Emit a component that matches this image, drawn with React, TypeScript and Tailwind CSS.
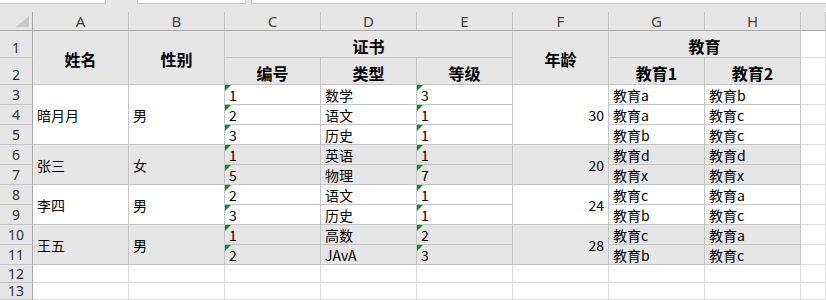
import React from "react";

type Group = {
  rows: number[];
  name: string;
  sex: string;
  c: string[];
  d: string[];
  e: string[];
  age: string;
  g: string[];
  h: string[];
  gray: boolean;
};

const groups: Group[] = [
  { rows: [3, 4, 5], name: "暗月月", sex: "男", c: ["1", "2", "3"], d: ["数学", "语文", "历史"], e: ["3", "1", "1"], age: "30", g: ["教育a", "教育a", "教育b"], h: ["教育b", "教育c", "教育c"], gray: false },
  { rows: [6, 7], name: "张三", sex: "女", c: ["1", "5"], d: ["英语", "物理"], e: ["1", "7"], age: "20", g: ["教育d", "教育x"], h: ["教育d", "教育x"], gray: true },
  { rows: [8, 9], name: "李四", sex: "男", c: ["2", "3"], d: ["语文", "历史"], e: ["1", "1"], age: "24", g: ["教育c", "教育b"], h: ["教育a", "教育c"], gray: false },
  { rows: [10, 11], name: "王五", sex: "男", c: ["1", "2"], d: ["高数", "JAvA"], e: ["2", "3"], age: "28", g: ["教育c", "教育b"], h: ["教育a", "教育c"], gray: true },
];

const COL_START = ["", "col-start-1", "col-start-2", "col-start-3", "col-start-4", "col-start-5", "col-start-6", "col-start-7", "col-start-8", "col-start-9", "col-start-10"];
const ROW_START = ["", "row-start-1", "row-start-2", "row-start-3", "row-start-4", "row-start-5", "row-start-6", "row-start-7", "row-start-8", "row-start-9", "row-start-10", "row-start-11", "row-start-12", "row-start-13", "row-start-14"];
const ROW_SPAN = ["", "row-span-1", "row-span-2", "row-span-3"];
const COL_SPAN = ["", "col-span-1", "col-span-2", "col-span-3"];

type CellProps = {
  col: number;
  row: number; // sheet row
  rs?: number;
  cs?: number;
  text?: string;
  align?: "left" | "center" | "right";
  bold?: boolean;
  gray?: boolean;
  flag?: boolean;
  light?: boolean;
};

function Cell({ col, row, rs = 1, cs = 1, text, align = "left", bold, gray, flag, light }: CellProps) {
  const justify = align === "center" ? "justify-center" : align === "right" ? "justify-end" : "justify-start";
  return (
    <div
      className={`relative flex items-center ${justify} ${COL_START[col]} ${ROW_START[row + 1]} ${ROW_SPAN[rs]} ${COL_SPAN[cs]} border-r border-b ${
        light ? "border-[#dadada]" : "border-[#c4c4c4]"
      } ${gray ? "bg-[#e7e6e6]" : "bg-white"} ${bold ? "pt-[3px] text-[16px] font-bold" : "pt-[1px] text-[14px]"} px-[4px] leading-none whitespace-nowrap text-black`}
    >
      {flag && <span className="absolute left-0 top-0 h-0 w-0 border-t-[6px] border-r-[6px] border-t-[#14862a] border-r-transparent" />}
      {text}
    </div>
  );
}

const letters = ["A", "B", "C", "D", "E", "F", "G", "H", ""];

export default function App() {
  return (
    <div className="h-[300px] w-[826px] overflow-hidden bg-white font-['Noto_Sans_CJK_SC',sans-serif]">
      {/* formula bar remnant */}
      <div className="flex h-[12px] bg-[#e6e6e6]">
        <div className="h-[4px] w-[106px] border-r border-b border-[#c4c4c4] bg-white" />
        <div className="ml-[31px] h-[4px] w-[109px] border-x border-b border-[#c4c4c4] bg-white" />
        <div className="ml-[5px] h-[4px] flex-1 border-l border-b border-[#c4c4c4] bg-white" />
      </div>

      <div className="grid grid-cols-[33px_repeat(8,96px)_1fr] grid-rows-[19px_27px_27px_repeat(9,20px)_18px_17px]">
        {/* corner */}
        <div className="col-start-1 row-start-1 flex items-end justify-end border-r border-b border-r-[#a9a9a9] border-b-[#a9a9a9] bg-[#e6e6e6] pb-[3px] pr-[3px]">
          <svg width="13" height="11" viewBox="0 0 13 11">
            <polygon points="13,0 13,11 0,11" fill="#c9c9c9" />
          </svg>
        </div>
        {letters.map((l, i) => (
          <div
            key={`h${i}`}
            className={`${COL_START[i + 2]} row-start-1 flex items-center justify-center border-r border-b border-r-[#c4c4c4] border-b-[#a9a9a9] bg-[#e6e6e6] font-['Noto_Sans',sans-serif] text-[15px] leading-none text-[#444]`}
          >
            {l}
          </div>
        ))}

        {/* row numbers */}
        {Array.from({ length: 13 }, (_, i) => i + 1).map((r) => (
          <div
            key={`r${r}`}
            className={`col-start-1 ${ROW_START[r + 1]} flex ${r <= 2 ? "items-end pb-[2px]" : "items-center"} justify-center overflow-hidden border-r border-b border-r-[#a9a9a9] border-b-[#c4c4c4] bg-[#e6e6e6] font-['Noto_Sans',sans-serif] text-[14px] leading-none text-[#333]`}
          >
            {r}
          </div>
        ))}

        {/* header block */}
        <Cell col={2} row={1} rs={2} text="姓名" align="center" bold gray />
        <Cell col={3} row={1} rs={2} text="性别" align="center" bold gray />
        <Cell col={4} row={1} cs={3} text="证书" align="center" bold gray />
        <Cell col={4} row={2} text="编号" align="center" bold gray />
        <Cell col={5} row={2} text="类型" align="center" bold gray />
        <Cell col={6} row={2} text="等级" align="center" bold gray />
        <Cell col={7} row={1} rs={2} text="年龄" align="center" bold gray />
        <Cell col={8} row={1} cs={2} text="教育" align="center" bold gray />
        <Cell col={8} row={2} text="教育1" align="center" bold gray />
        <Cell col={9} row={2} text="教育2" align="center" bold gray />
        <Cell col={10} row={1} light />
        <Cell col={10} row={2} light />

        {groups.map((g) => {
          const first = g.rows[0];
          const n = g.rows.length;
          return (
            <React.Fragment key={g.name}>
              <Cell col={2} row={first} rs={n} text={g.name} gray={g.gray} />
              <Cell col={3} row={first} rs={n} text={g.sex} gray={g.gray} />
              <Cell col={7} row={first} rs={n} text={g.age} align="right" gray={g.gray} />
              {g.rows.map((r, k) => (
                <React.Fragment key={r}>
                  <Cell col={4} row={r} text={g.c[k]} gray={g.gray} flag />
                  <Cell col={5} row={r} text={g.d[k]} gray={g.gray} />
                  <Cell col={6} row={r} text={g.e[k]} gray={g.gray} flag />
                  <Cell col={8} row={r} text={g.g[k]} gray={g.gray} />
                  <Cell col={9} row={r} text={g.h[k]} gray={g.gray} />
                  <Cell col={10} row={r} light />
                </React.Fragment>
              ))}
            </React.Fragment>
          );
        })}

        {[12, 13].map((r) =>
          [2, 3, 4, 5, 6, 7, 8, 9, 10].map((c) => <Cell key={`e${r}-${c}`} col={c} row={r} light />)
        )}
      </div>
    </div>
  );
}
